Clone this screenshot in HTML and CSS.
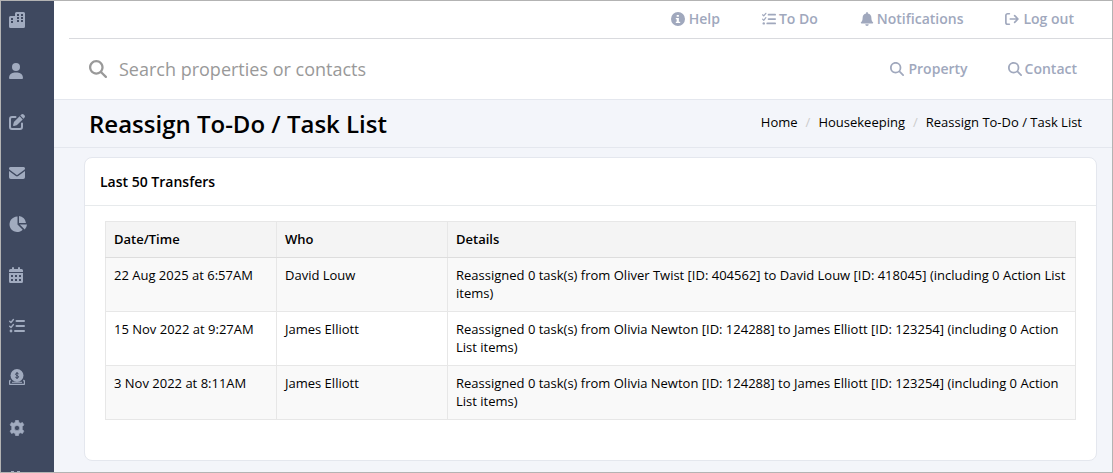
FILE: index.html
```html
<!DOCTYPE html>
<html lang="en">
<head>
<meta charset="utf-8">
<title>Reassign To-Do / Task List</title>
<meta name="viewport" content="width=device-width, initial-scale=1">
<link rel="stylesheet" href="styles.css">
</head>
<body>
<svg class="sprite" aria-hidden="true">
  <symbol id="i-search" viewBox="0 0 512 512"><path d="M416 208c0 45.900-14.900 88.300-40 122.700L502.600 457.400c12.500 12.500 12.500 32.800 0 45.300s-32.800 12.500-45.300 0L330.700 376c-34.400 25.200-76.800 40-122.700 40C93.100 416 0 322.900 0 208S93.100 0 208 0S416 93.100 416 208zM208 352a144 144 0 1 0 0-288 144 144 0 1 0 0 288z"/></symbol>
  <symbol id="i-tasks" viewBox="0 0 16 16"><path d="M.7 3.200l1.300 1.300L4.400 1.500M.7 8.200l1.300 1.300L4.400 6.500" fill="none" stroke="currentColor" stroke-width="1.400" stroke-linecap="round" stroke-linejoin="round"/><circle cx="2" cy="13" r="1.400"/><rect x="6.500" y="2" width="9.500" height="2" rx="1"/><rect x="6.500" y="7" width="9.500" height="2" rx="1"/><rect x="5" y="12" width="11" height="2" rx="1"/></symbol>
</svg>
<div class="app">
  <nav class="sidebar" aria-label="Main">
    <a href="#" aria-label="Properties"><svg viewBox="0 0 16 16"><path fill-rule="evenodd" d="M7.500 0h7A1.500 1.500 0 0 1 16 1.500v13a1.500 1.500 0 0 1-1.500 1.500h-13A1.500 1.500 0 0 1 0 14.500v-9A1.500 1.500 0 0 1 1.500 4H6V1.500A1.500 1.500 0 0 1 7.500 0zM8 2v2h2V2zm4 0v2h2V2zM8 5v2h2V5zm4 0v2h2V5zM8 8v2h2V8zm4 0v2h2V8zM2 6v2h2V6zm0 3v2h2V9z"/></svg></a>
    <a href="#" aria-label="Contacts"><svg viewBox="0 0 16 16"><circle cx="7" cy="4" r="4"/><path d="M0 15a5.500 5.500 0 0 1 5.500-5.500h3A5.500 5.500 0 0 1 14 15a1 1 0 0 1-1 1H1a1 1 0 0 1-1-1z"/></svg></a>
    <a href="#" aria-label="Edit"><svg viewBox="0 0 16 16"><path d="M6.500 3H3a2 2 0 0 0-2 2v8a2 2 0 0 0 2 2h8a2 2 0 0 0 2-2V9.500" fill="none" stroke="currentColor" stroke-width="2" stroke-linecap="round"/><path d="M12.300.6a1.700 1.700 0 0 1 2.400 0l.7.7a1.700 1.700 0 0 1 0 2.400l-1 1-3.100-3.100zM10.600 2.300l3.100 3.100-5.200 5.200c-.3.300-.6.500-.9.600l-2.500.7a.8.800 0 0 1-1-1l.7-2.500c.1-.4.300-.7.600-.9z"/></svg></a>
    <a href="#" aria-label="Mail"><svg viewBox="0 0 16 16"><path d="M1.500 2h13a1.500 1.500 0 0 1 .9 2.700L8.600 9.800a1 1 0 0 1-1.200 0L.6 4.700A1.500 1.500 0 0 1 1.500 2z"/><path d="M0 6l6.800 5.100a2 2 0 0 0 2.400 0L16 6v6.200a1.800 1.800 0 0 1-1.800 1.800H1.800A1.800 1.800 0 0 1 0 12.200z"/></svg></a>
    <a href="#" aria-label="Reports"><svg class="wide" viewBox="0 0 18 16"><path d="M8.500.6V8.500l5.200 5.200A7.700 7.700 0 1 1 8.500.6z"/><path d="M10 0a7.500 7.500 0 0 1 7 7h-7zM10.700 8.500H18a8 8 0 0 1-2.300 5z"/></svg></a>
    <a href="#" aria-label="Calendar"><svg viewBox="0 0 16 16"><path fill-rule="evenodd" d="M4 0a1 1 0 0 1 1 1v1h4V1a1 1 0 0 1 2 0v1h1.500A1.500 1.500 0 0 1 14 3.500V5H0V3.500A1.500 1.500 0 0 1 1.500 2H3V1a1 1 0 0 1 1-1zM0 6h14v8.500a1.500 1.500 0 0 1-1.500 1.500h-11A1.500 1.500 0 0 1 0 14.500zm2 2v2h2V8zm4 0v2h2V8zm4 0v2h2V8zm-8 4v2h2v-2zm4 0v2h2v-2zm4 0v2h2v-2z"/></svg></a>
    <a href="#" aria-label="Tasks"><svg><use href="#i-tasks"/></svg></a>
    <a href="#" aria-label="Finance"><svg viewBox="0 0 16 16"><circle cx="8" cy="6.500" r="6.500"/><path d="M9.600 4.900C9.300 3.900 6.500 3.900 6.500 5.200S9.600 6.500 9.600 7.900 6.700 9.200 6.300 8.100M8 3v7" fill="none" stroke="#3f4960"/><path d="M1.800 11.500h-.3a1 1 0 0 0-1 1v2a1 1 0 0 0 1 1h13a1 1 0 0 0 1-1v-2a1 1 0 0 0-1-1h-.3" fill="none" stroke="currentColor" stroke-width="1.300"/><path d="M3 13.300h10" stroke="currentColor"/></svg></a>
    <a href="#" aria-label="Settings"><svg viewBox="0 0 16 16"><path fill-rule="evenodd" d="M6.600.3h2.800l.5 2.100 1.400.8 2.200-.7 1.400 2.400-1.600 1.600v3l1.600 1.600-1.400 2.400-2.200-.7-1.400.8-.5 2.100H6.600l-.5-2.100-1.400-.8-2.200.7-1.400-2.400 1.600-1.600v-3L1.100 4.900l1.400-2.400 2.200.7 1.400-.8zM8 5.400a2.600 2.600 0 1 0 0 5.200 2.600 2.600 0 0 0 0-5.200z" stroke="currentColor" stroke-width=".6" stroke-linejoin="round"/></svg></a>
    <a href="#" aria-label="More"><svg viewBox="0 0 16 16"><path d="M2 0h3v16H2zM8 0h3v16H8z"/></svg></a>
  </nav>
  <div class="page">
    <header class="top">
      <nav class="links" aria-label="Account">
        <a href="#"><svg viewBox="0 0 16 16"><path fill-rule="evenodd" d="M8 0a8 8 0 1 1 0 16A8 8 0 0 1 8 0zM6.500 3.500v2h2.500v-2zM5.500 6.800v1.500h1v2.700h-1v1.500h5V11H9V6.800z"/></svg>Help</a>
        <a href="#" class="tight"><svg><use href="#i-tasks"/></svg>To Do</a>
        <a href="#" class="tight"><svg viewBox="0 0 16 16"><path d="M8 0a1 1 0 0 1 1 1v.6A5 5 0 0 1 13 6.500c0 2.500.6 3.900 1.800 5.100A.8.800 0 0 1 14.200 13H1.800a.8.800 0 0 1-.6-1.400C2.400 10.400 3 9 3 6.500a5 5 0 0 1 4-4.900V1a1 1 0 0 1 1-1zM6 14h4a2 2 0 0 1-4 0z"/></svg>Notifications</a>
        <a href="#"><svg viewBox="0 0 16 16"><path d="M5 2H3a2 2 0 0 0-2 2v8a2 2 0 0 0 2 2h2M6 8h8.500M11 4.200L14.800 8 11 11.800" fill="none" stroke="currentColor" stroke-width="1.900" stroke-linecap="round" stroke-linejoin="round"/></svg>Log out</a>
      </nav>
      <form class="search" role="search">
        <label class="field"><svg><use href="#i-search"/></svg><input type="search" placeholder="Search properties or contacts" aria-label="Search properties or contacts"></label>
        <div class="scope">
          <a href="#"><svg><use href="#i-search"/></svg>Property</a>
          <a href="#" class="tight"><svg><use href="#i-search"/></svg>Contact</a>
        </div>
      </form>
    </header>
    <div class="heading">
      <h1>Reassign To-Do / Task List</h1>
      <ol class="crumbs">
        <li><a href="#">Home</a></li>
        <li><a href="#">Housekeeping</a></li>
        <li><a href="#">Reassign To-Do / Task List</a></li>
      </ol>
    </div>
    <main class="content">
      <section class="card">
        <h2>Last 50 Transfers</h2>
        <div class="body">
          <table>
            <colgroup><col class="narrow"><col class="narrow"><col></colgroup>
            <thead><tr><th scope="col">Date/Time</th><th scope="col">Who</th><th scope="col">Details</th></tr></thead>
            <tbody>
              <tr><td>22 Aug 2025 at 6:57AM</td><td>David Louw</td><td>Reassigned 0 task(s) from Oliver Twist [ID: 404562] to David Louw [ID: 418045] (including 0 Action List items)</td></tr>
              <tr><td>15 Nov 2022 at 9:27AM</td><td>James Elliott</td><td>Reassigned 0 task(s) from Olivia Newton [ID: 124288] to James Elliott [ID: 123254] (including 0 Action List items)</td></tr>
              <tr><td>3 Nov 2022 at 8:11AM</td><td>James Elliott</td><td>Reassigned 0 task(s) from Olivia Newton [ID: 124288] to James Elliott [ID: 123254] (including 0 Action List items)</td></tr>
            </tbody>
          </table>
        </div>
      </section>
    </main>
  </div>
</div>
</body>
</html>
```
FILE: styles.css
```css
* { box-sizing: border-box; }

body {
  margin: 0;
  font: 13px/18px "Open Sans", "Noto Sans", sans-serif;
  color: #000;
  background: #f3f5fa;
}

a { color: inherit; text-decoration: none; }
svg { width: 16px; height: 16px; fill: currentColor; flex: none; }
.sprite { position: absolute; width: 0; height: 0; }

.app {
  display: flex;
  height: 100vh;
  border: 1px solid #b3b3b3;
  overflow: hidden;
}

.sidebar {
  display: flex;
  flex-direction: column;
  gap: 35px;
  flex: 0 0 53px;
  padding: 11px 8px 0;
  overflow: hidden;
  color: #a1abbf;
  background: #3f4960;
}
.sidebar a { display: flex; }
.sidebar .wide { width: 18px; }

.page { flex: 1; min-width: 0; overflow: hidden; }

.top {
  background: #fff;
  border-bottom: 1px solid #e4e7ee;
  color: #a0a8bd;
  font-size: 14px;
  font-weight: 600;
}
.top a { display: flex; align-items: center; gap: 4px; }
.top a.tight { gap: 3px; }
.top a svg { width: 14px; height: 14px; }

.links {
  display: flex;
  justify-content: flex-end;
  align-items: center;
  gap: 42px;
  height: 38px;
  margin-left: 15px;
  padding: 0 38px 2px 0;
  border-bottom: 1px solid #d9dade;
}

.search {
  display: flex;
  align-items: center;
  justify-content: space-between;
  height: 60px;
  padding: 0 35px;
}
.field { display: flex; align-items: center; gap: 12px; flex: 1; color: #999; }
.field svg { width: 18px; height: 18px; }
.field input {
  flex: 1;
  min-width: 0;
  padding: 0;
  border: 0;
  outline: 0;
  background: none;
  font: 18px/26px "Open Sans", "Noto Sans", sans-serif;
}
.field input::placeholder { color: #999; opacity: 1; }
.scope { display: flex; gap: 40px; }

.heading {
  display: flex;
  align-items: center;
  justify-content: space-between;
  height: 48px;
  padding: 0 30px 0 35px;
  border-bottom: 1px solid #e4e7ee;
}
.heading h1 { margin: 0; font-size: 24px; line-height: 32px; font-weight: 600; }

.crumbs { display: flex; margin: 0; padding: 0 0 4px; list-style: none; }
.crumbs li + li::before { content: "/"; padding: 0 8px; color: #ccc; }

.content { padding: 9px 15px 11px 30px; }

.card {
  background: #fff;
  border: 1px solid #e4e7ee;
  border-radius: 8px;
}
.card h2 {
  margin: 0;
  padding: 15px 15px 14px;
  border-bottom: 1px solid #e7eaec;
  font-size: 14px;
  line-height: 18px;
  font-weight: 600;
}
.body { padding: 15px 20px 40px; }

table { width: 100%; border-collapse: collapse; table-layout: fixed; }
.narrow { width: 171px; }
th, td {
  padding: 8px;
  padding-bottom: 9px;
  border: 1px solid #e7e7e7;
  text-align: left;
  vertical-align: top;
}
th { font-weight: 600; background: #f4f4f4; border-bottom-color: #ddd; }
tbody tr:nth-child(odd) { background: #f9f9f9; }
```
